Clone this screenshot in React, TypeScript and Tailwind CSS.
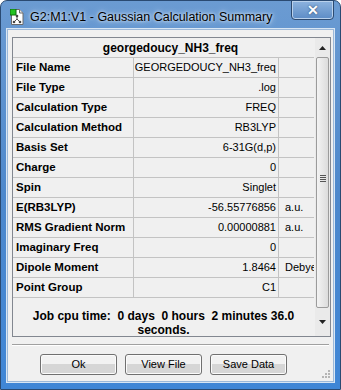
import React from "react";

const rows: { label: string; value: string; unit?: string }[] = [
  { label: "File Name", value: "GEORGEDOUCY_NH3_freq" },
  { label: "File Type", value: ".log" },
  { label: "Calculation Type", value: "FREQ" },
  { label: "Calculation Method", value: "RB3LYP" },
  { label: "Basis Set", value: "6-31G(d,p)" },
  { label: "Charge", value: "0" },
  { label: "Spin", value: "Singlet" },
  { label: "E(RB3LYP)", value: "-56.55776856", unit: "a.u." },
  { label: "RMS Gradient Norm", value: "0.00000881", unit: "a.u." },
  { label: "Imaginary Freq", value: "0" },
  { label: "Dipole Moment", value: "1.8464", unit: "Debye" },
  { label: "Point Group", value: "C1" },
];

const WinIcon = () => (
  <svg width="14" height="16" viewBox="0 0 14 16">
    <path d="M1.5 0.5h8l3.5 3.5v11.5h-11.5z" fill="#fff" stroke="#6b6b6b" />
    <path d="M9.5 0.5v3.5h3.5" fill="#e6e6e6" stroke="#6b6b6b" />
    <rect x="0" y="0" width="6" height="6" fill="#22c322" stroke="#0d6a0d" strokeWidth="1" />
    <path d="M7 7v3M7 10l-3 3M7 10l3 3" stroke="#555" strokeWidth="1" fill="none" />
    <circle cx="7" cy="7" r="1.3" fill="#444" />
    <circle cx="4" cy="13" r="1.3" fill="#444" />
    <circle cx="10" cy="13" r="1.3" fill="#444" />
  </svg>
);

const Btn = ({ children }: { children: React.ReactNode }) => (
  <button className="w-[77px] h-[21px] rounded-[3px] border border-[#707070] bg-gradient-to-b from-[#f2f2f2] from-50% to-[#d6d6d6] to-50% text-[11px] text-black shadow-[inset_0_0_0_1px_#fbfbfb]">
    {children}
  </button>
);

export default function App() {
  return (
    <div
      className="w-[341px] h-[390px] flex flex-col rounded-t-[7px] border border-[#2a4a72] bg-gradient-to-b from-[#6b9bd2] via-[#4d88cc] to-[#3f86d6] overflow-hidden"
      style={{ fontFamily: '"Liberation Sans", Arial, sans-serif' }}
    >
      {/* title bar */}
      <div className="h-[28px] flex items-start shrink-0">
        <div className="ml-[9px] mt-[8px]">
          <WinIcon />
        </div>
        <div className="ml-[6px] mt-[7px] text-[12.5px] text-black [text-shadow:0_0_6px_#dbe8f5,0_0_3px_#eaf2fb]">
          G2:M1:V1 - Gaussian Calculation Summary
        </div>
        <div className="ml-auto mr-[6px] -mt-[1px] w-[43px] h-[20px] rounded-b-[4px] border border-[#2c4a70] bg-gradient-to-b from-[#8db3de] to-[#5c8cc6] shadow-[inset_0_0_0_1px_#b9d1ec] flex items-center justify-center">
          <span className="text-white font-bold text-[14px] leading-none [text-shadow:0_0_2px_#1d3a5e]">✕</span>
        </div>
      </div>

      {/* client area */}
      <div className="mx-[6px] mb-[7px] flex-1 flex flex-col border border-[#9cb8d8] bg-[#f0f0f0] shadow-[0_0_0_1px_#d8e6f4]">
        <div className="mt-[7px] ml-[4px] mr-[2px] h-[300px] shrink-0 flex border border-[#828790] bg-[#f0f0f0]">
          {/* grid body */}
          <div className="flex-1 flex flex-col text-black overflow-hidden">
            <div className="h-[20px] shrink-0 border-b border-[#c3c3c3] flex items-center justify-center pl-[14px] text-[12px] font-bold">
              georgedoucy_NH3_freq
            </div>
            {rows.map((r) => (
              <div key={r.label} className="h-[20px] shrink-0 flex border-b border-[#c3c3c3]">
                <div className="w-[121px] border-r border-[#c3c3c3] pl-[3px] flex items-center text-[11.5px] font-bold whitespace-nowrap">
                  {r.label}
                </div>
                <div className="w-[145px] border-r border-[#c3c3c3] pr-[2px] flex items-center justify-end text-[11px] whitespace-nowrap overflow-hidden">
                  {r.value}
                </div>
                <div className="flex-1 pl-[6px] flex items-center text-[11px] whitespace-nowrap overflow-hidden">
                  {r.unit}
                </div>
              </div>
            ))}
            <div className="mt-[11px] shrink-0 text-center text-[12px] font-bold leading-[14px] whitespace-pre">
              {"Job cpu time:  0 days  0 hours  2 minutes 36.0"}
              <br />
              {"seconds."}
            </div>
          </div>
          {/* scrollbar */}
          <div className="w-[16px] flex flex-col bg-[#eaeaea] border-l border-[#f0f0f0]">
            <div className="h-[19px] flex items-center justify-center">
              <svg width="7" height="4" viewBox="0 0 7 4">
                <path d="M0 4L3.5 0L7 4z" fill="#222" />
              </svg>
            </div>
            <div className="mx-[1px] h-[251px] rounded-[2px] border border-[#9b9b9b] bg-gradient-to-r from-[#f3f3f3] to-[#dcdcdc] flex items-center justify-center">
              <div className="flex flex-col gap-[1px] -mt-[8px]">
                <div className="w-[6px] h-[1px] bg-[#555]" />
                <div className="w-[6px] h-[1px] bg-[#555]" />
                <div className="w-[6px] h-[1px] bg-[#555]" />
                <div className="w-[6px] h-[1px] bg-[#555]" />
              </div>
            </div>
            <div className="flex-1 flex items-center justify-center">
              <svg width="7" height="4" viewBox="0 0 7 4">
                <path d="M0 0L3.5 4L7 0z" fill="#222" />
              </svg>
            </div>
          </div>
        </div>

        {/* etched separator */}
        <div className="mt-[7px] ml-[4px] mr-[4px] h-[2px] border-t border-[#a0a0a0] border-b border-b-white" />

        {/* buttons */}
        <div className="mt-[8px] ml-[32px] flex gap-[8px] items-center">
          <Btn>Ok</Btn>
          <Btn>View File</Btn>
          <Btn>Save Data</Btn>
          <div className="ml-auto mr-[2px] self-end mb-[-4px]">
            <svg width="10" height="10" viewBox="0 0 10 10">
              <g fill="#b5b5b5">
                <rect x="7" y="1" width="2" height="2" />
                <rect x="4" y="4" width="2" height="2" />
                <rect x="7" y="4" width="2" height="2" />
                <rect x="1" y="7" width="2" height="2" />
                <rect x="4" y="7" width="2" height="2" />
                <rect x="7" y="7" width="2" height="2" />
              </g>
            </svg>
          </div>
        </div>
      </div>
    </div>
  );
}
